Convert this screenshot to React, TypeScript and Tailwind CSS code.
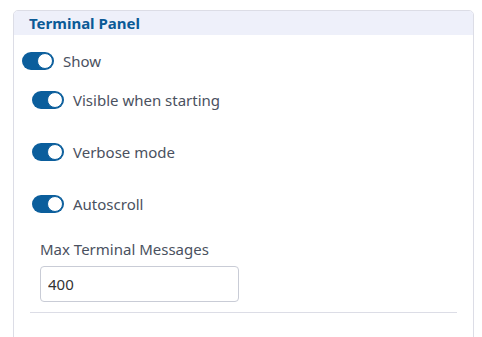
import React, { useState } from 'react';

type ToggleRowProps = {
  label: string;
  checked: boolean;
  onChange: (v: boolean) => void;
};

const ToggleRow: React.FC<ToggleRowProps> = ({ label, checked, onChange }) => {
  return (
    <label className="flex items-center gap-[9px] h-[18px] cursor-pointer select-none">
      <button
        type="button"
        role="switch"
        aria-checked={checked}
        onClick={() => onChange(!checked)}
        className={`relative w-[32px] h-[18px] rounded-full shrink-0 ${checked ? 'bg-[#0b5e9c]' : 'bg-[#c4c7d0]'}`}
      >
        <span
          className={`absolute top-[1px] w-[16px] h-[16px] rounded-full bg-white border border-[#0b5e9c] ${checked ? 'left-[15px]' : 'left-[1px]'}`}
        />
      </button>
      <span className="text-[15px] text-[#4a5160] leading-[18px]">{label}</span>
    </label>
  );
};

export default function App() {
  const [show, setShow] = useState(true);
  const [visible, setVisible] = useState(true);
  const [verbose, setVerbose] = useState(true);
  const [autoscroll, setAutoscroll] = useState(true);
  const [maxMessages, setMaxMessages] = useState('400');

  return (
    <div className="pt-[10px] pl-[13px] w-[482px] h-[337px] overflow-hidden bg-white" style={{ fontFamily: '"Noto Sans", "Open Sans", sans-serif' }}>
      <div className="w-[461px] border border-[#dcdde6] rounded-[5px] overflow-hidden">
        <div className="h-[24px] bg-[#eef0fa] pl-[15px] text-[15px] font-bold text-[#0b5a96] leading-[24px]">
          Terminal Panel
        </div>
        <div className="px-[8px] pt-[17px] pb-[30px]">
          <ToggleRow label="Show" checked={show} onChange={setShow} />
          <div className="pl-[10px] pt-[21px] flex flex-col gap-[34px]">
            <ToggleRow label="Visible when starting" checked={visible} onChange={setVisible} />
            <ToggleRow label="Verbose mode" checked={verbose} onChange={setVerbose} />
            <ToggleRow label="Autoscroll" checked={autoscroll} onChange={setAutoscroll} />
          </div>
          <div className="pl-[18px] pt-[26px]">
            <div className="text-[15px] text-[#4a5160] leading-[20px]">Max Terminal Messages</div>
            <input
              value={maxMessages}
              onChange={(e) => setMaxMessages(e.target.value)}
              className="mt-[7px] w-[199px] h-[36px] border border-[#c9ccd6] rounded-[4px] px-[7px] text-[15px] text-[#333] outline-none"
            />
          </div>
          <div className="mx-[8px] mt-[10px] border-t border-[#dcdde6]" />
        </div>
      </div>
    </div>
  );
}
